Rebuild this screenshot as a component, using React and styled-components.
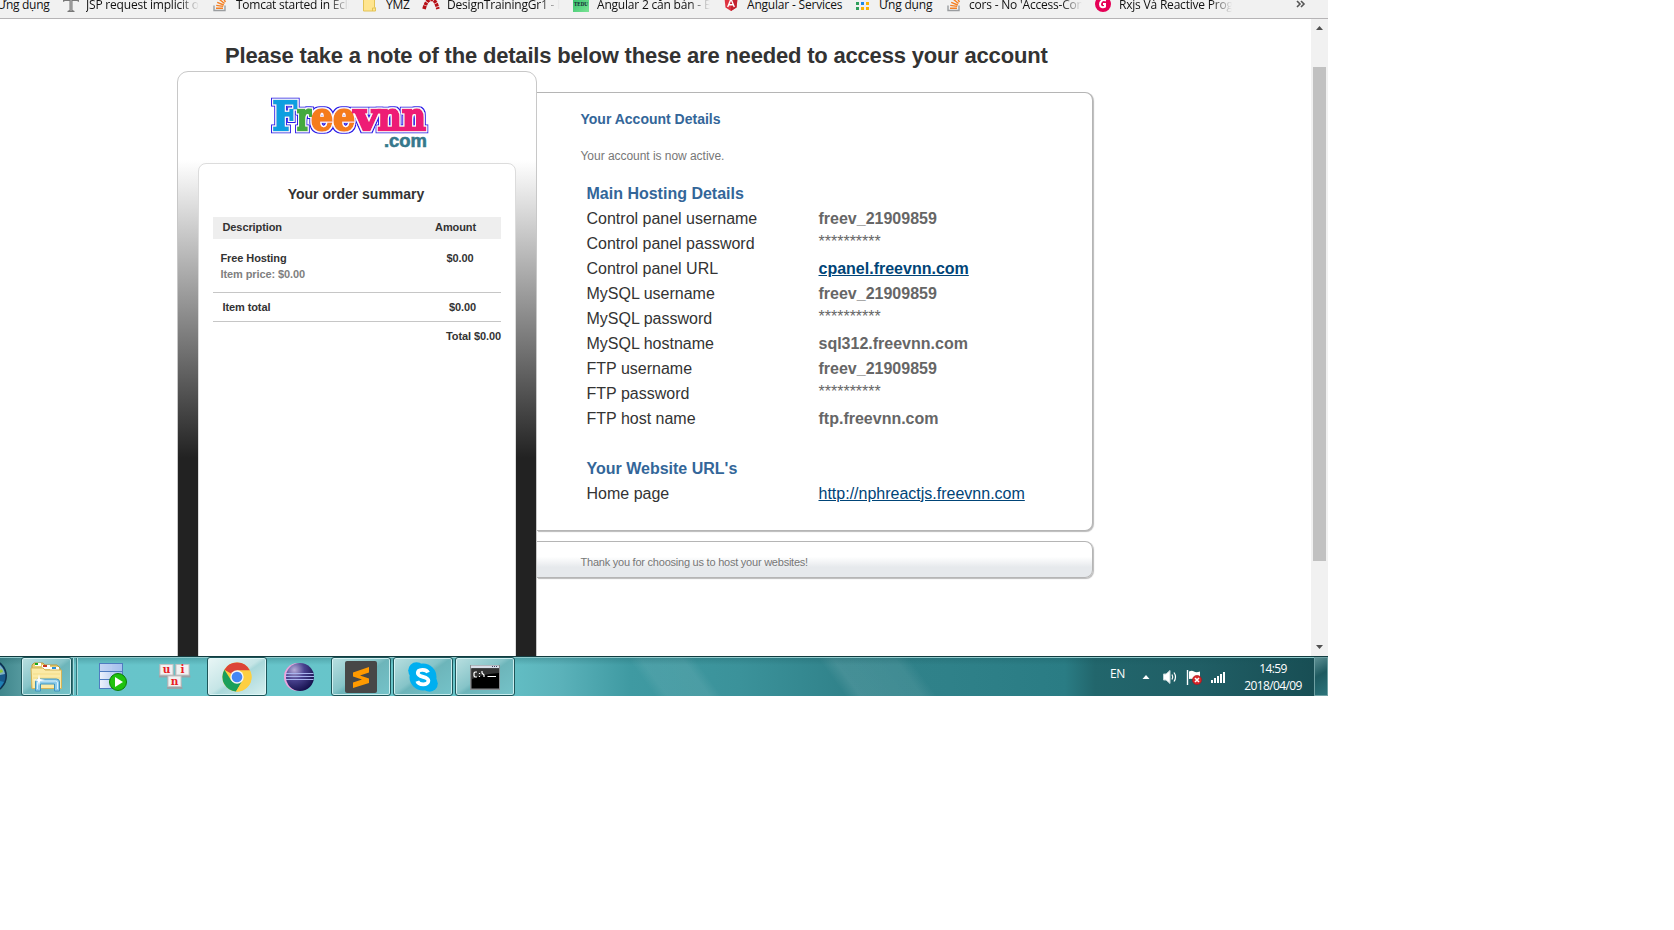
import React from "react";
import styled, { createGlobalStyle } from "styled-components";

const Global = createGlobalStyle`
  html, body { margin: 0; background: #fff; }
  body { font-family: "Liberation Sans", Arial, sans-serif; overflow: hidden; }
`;

const ui = `"Open Sans", "Noto Sans", sans-serif`;

const Screen = styled.div`
  width: 1328px;
  height: 696px;
  display: flex;
  flex-direction: column;
  overflow: hidden;
`;

/* Bookmarks */
const Bookmarks = styled.div`
  box-sizing: border-box;
  height: 19px;
  flex: none;
  display: flex;
  background: #f1f1f1;
  border-bottom: 1px solid #b6b4b6;
  overflow: hidden;
`;
const Bookmark = styled.div`
  width: ${(p) => p.$w}px;
  flex: none;
  height: 18px;
  margin-top: -4px;
  display: flex;
  gap: 7px;
  svg { flex: none; }
`;
const BookmarkText = styled.span`
  width: ${(p) => p.$w || 113}px;
  margin-left: ${(p) => p.$shift || 0}px;
  font: 12px/18px ${ui};
  letter-spacing: ${(p) => p.$ls || 0}px;
  color: #111;
  white-space: nowrap;
  overflow: hidden;
  ${(p) => p.$fade && "mask-image: linear-gradient(90deg, #000 82%, transparent 100%);"}
`;

/* Page */
const Middle = styled.div`
  display: flex;
  height: 637px;
  flex: none;
`;
const Page = styled.main`
  width: 1311px;
  overflow: hidden;
`;
const Heading = styled.h1`
  box-sizing: border-box;
  margin: 0;
  height: 52px;
  padding: 21px 0 0 225px;
  font-size: 22px;
  line-height: 31px;
  letter-spacing: -0.19px;
  color: #333;
  white-space: nowrap;
`;
const Columns = styled.div`
  display: flex;
  padding-left: 177px;
`;
const Side = styled.aside`
  box-sizing: border-box;
  width: 360px;
  height: 600px;
  flex: none;
  border: 1px solid #c8c8c8;
  border-radius: 11px 11px 0 0;
  background: linear-gradient(#fff 88px, #222 386px);
`;
const LogoBox = styled.div`
  height: 91px;
  padding-left: 85px;
  svg { display: block; }
`;
const Summary = styled.section`
  box-sizing: border-box;
  width: 318px;
  height: 520px;
  margin-left: 20px;
  padding: 20px 14px 0;
  border: 1px solid #dcdcdc;
  border-radius: 8px 8px 0 0;
  background: #fff;
  font-size: 11px;
  font-weight: bold;
  letter-spacing: -0.1px;
  color: #333;
`;
const SummaryTitle = styled.h2`
  margin: 0 0 13px;
  font-size: 14px;
  line-height: 20px;
  letter-spacing: 0;
  text-align: center;
  padding-right: 2px;
`;
const Line = styled.div`
  display: flex;
  justify-content: space-between;
`;
const HeadLine = styled(Line)`
  height: 22px;
  line-height: 20px;
  padding: 0 25px 0 9.5px;
  background: #eee;
`;
const ItemLine = styled(Line)`
  line-height: 16px;
  padding: 11px 27.500px 10px 7.500px;
  border-bottom: 1px solid #c6c6c6;
`;
const ItemPrice = styled.div`
  color: #808080;
`;
const TotalLine = styled(Line)`
  line-height: 28px;
  padding: 0 25px 0 9.5px;
  border-bottom: 1px solid #c6c6c6;
`;
const GrandTotal = styled.div`
  line-height: 28px;
  text-align: right;
`;
const Main = styled.div`
  width: 556px;
  padding-top: 21px;
`;
const Panel = styled.section`
  box-sizing: border-box;
  height: ${(p) => p.$h}px;
  margin-bottom: 10px;
  border: 1px solid #b5b5b5;
  border-left: 0;
  border-radius: 0 8px 8px 0;
  box-shadow: 1px 1px 1px #bbb;
  padding: ${(p) => p.$pt}px 0 0 43.500px;
  background: ${(p) => (p.$shaded ? "linear-gradient(#fff 42%, #e6e9ec 72%)" : "#fff")};
`;
const PanelTitle = styled.h2`
  margin: 0 0 17px;
  font-size: 14px;
  line-height: 20px;
  color: #369;
`;
const Note = styled.p`
  margin: 0 0 15px;
  font-size: 12px;
  line-height: 20px;
  letter-spacing: -0.04px;
  color: #777;
`;
const Thanks = styled.p`
  margin: 0;
  font-size: 11px;
  line-height: 32px;
  letter-spacing: -0.23px;
  color: #777;
`;
const Group = styled.div`
  padding: 0 0 25px 6px;
  font-size: 16px;
  line-height: 25px;
  color: #333;
`;
const GroupTitle = styled.div`
  font-weight: bold;
  color: #369;
`;
const Row = styled.div`
  display: grid;
  grid-template-columns: 232px 1fr;
  height: 25px;
`;
const Value = styled.span`
  font-weight: bold;
  color: #666;
`;
const Mask = styled.span`
  line-height: 21px;
  color: #666;
`;
const Link = styled.a`
  font-weight: ${(p) => (p.$plain ? "normal" : "bold")};
  color: #047;
  text-decoration: underline;
`;

/* Scrollbar */
const Scrollbar = styled.div`
  width: 17px;
  display: flex;
  flex-direction: column;
  align-items: center;
  justify-content: space-between;
  background: #f1f1f1;
  svg { display: block; }
`;
const Thumb = styled.div`
  width: 13px;
  height: 494px;
  margin-bottom: 78px;
  background: #c1c1c1;
`;

/* Taskbar */
const Taskbar = styled.footer`
  box-sizing: border-box;
  height: 40px;
  flex: none;
  display: flex;
  border-top: 1px solid #123c40;
  box-shadow: inset 0 1px #8fc9cb;
  background:
    linear-gradient(rgba(20, 80, 85, 0.28), transparent 8px),
    linear-gradient(54deg, transparent 530px, rgba(255,255,255,.07) 540px, rgba(255,255,255,.08) 574px, transparent 584px),
    linear-gradient(54deg, transparent 684px, rgba(255,255,255,.1) 696px, rgba(255,255,255,.08) 746px, transparent 758px),
    linear-gradient(90deg, #3f868c 0, #55999e 22px, #67c4ca 80px, #67c5ca 480px, #5bb2ba 560px, #3f9aa2 630px, #3b929a 740px, #31838b 840px, #2f8189 950px, #2a7c84 1065px, #22666c 1095px, #205e65 1200px, #174c52 1328px);
`;
const Orb = styled.div`
  width: 21px;
  svg { display: block; }
`;
const Task = styled.div`
  box-sizing: border-box;
  width: ${(p) => p.$w || 60}px;
  height: 39px;
  flex: none;
  margin-right: ${(p) => (p.$mr === undefined ? 2 : p.$mr)}px;
  display: flex;
  align-items: center;
  justify-content: center;
  border: 1px solid ${(p) => (p.$open ? "#1d5559" : "transparent")};
  border-radius: 3px;
  ${(p) =>
    p.$open &&
    `box-shadow: inset 0 0 0 1px rgba(225,250,250,.8);
     background: ${
       p.$active
         ? "linear-gradient(145deg, #e9f6f6 0%, #c5e5e6 48%, #a9d8da 54%, #d6efef 100%)"
         : "linear-gradient(145deg, #b9dfe0 0%, #86c4c8 45%, #6db5ba 52%, #75c3c9 100%)"
     };`}
`;
const Stack = styled.div`
  box-sizing: border-box;
  width: 8px;
  height: 37px;
  margin: 1px 3px 0 0;
  display: flex;
  gap: 2px;
  i { width: 1px; border-right: 1px solid #a8dcde; background: #35777c; }
`;
const Spacer = styled.div`
  flex: 1;
`;
const Tray = styled.div`
  display: flex;
  align-items: center;
  gap: 8px;
  color: #fff;
  font: 12px/17px ${ui};
`;
const Lang = styled.span`
  width: 24px;
  padding-bottom: 6px;
  letter-spacing: -0.3px;
`;
const Caret = styled.svg`
  margin-right: 4px;
`;
const Clock = styled.div`
  width: 76px;
  margin: 0 -5px 0 1px;
  text-align: center;
  letter-spacing: -0.6px;
`;
const ShowDesktop = styled.div`
  box-sizing: border-box;
  width: 14px;
  height: 39px;
  border: 1px solid #6fa0a3;
  background: linear-gradient(150deg, #5c8f93, #1e5a60 45%, #2c737a);
`;

const StackIcon = () => (
  <svg width="16" height="16" viewBox="0 0 16 16">
    <path d="M2 9.5v5h11v-5" fill="none" stroke="#9a9da0" strokeWidth="1.4" />
    <path d="M4 12.3h7M4.2 9.4l7 1M5.2 6.4l6.6 2.6M7.2 3.2l5.3 4.3M10 .6l3.5 5.4" stroke="#f48024" strokeWidth="1.4" />
  </svg>
);
const AppsIcon = () => (
  <svg width="16" height="16" viewBox="0 0 16 16">
    {["#e8453c", "#e8453c", "#f9a825", "#2e9e5b", "#1e88e5", "#fbb300", "#2e9e5b", "#fbb300", "#fbb300"].map((c, i) => (
      <rect key={i} x={(i % 3) * 5} y={1 + Math.floor(i / 3) * 5} width="3" height="3" fill={c} />
    ))}
  </svg>
);
const TowerIcon = () => (
  <svg width="16" height="16" viewBox="0 0 16 16">
    <path d="M0 3h16v3l-2-1H9.500v9l2 1v1h-7v-1l2-1V5H2L0 6z" fill="#777" />
    <path d="M8 4v11" stroke="#bbb" />
  </svg>
);
const FolderIcon = () => (
  <svg width="16" height="16" viewBox="0 0 16 16">
    <path d="M2.500 0h11v11l1 1v3h-12z" fill="#ffe58f" stroke="#e3c356" />
    <path d="M11.500 15v-3h3" fill="none" stroke="#e3c356" />
  </svg>
);
const ArchIcon = () => (
  <svg width="18" height="16" viewBox="0 0 18 16">
    <path d="M2 13C3.500 8 5 4 9 3.500S14.500 8 16 13" fill="none" stroke="#b80f16" strokeWidth="3.600" strokeDasharray="3.200 .7" />
  </svg>
);
const GreenIcon = () => (
  <svg width="16" height="16" viewBox="0 0 16 16">
    <defs>
      <linearGradient id="green" x2="1" y2="1">
        <stop stopColor="#2dbd67" />
        <stop offset="1" stopColor="#7be495" />
      </linearGradient>
    </defs>
    <rect width="16" height="16" fill="url(#green)" />
    <text x="8" y="9.500" textAnchor="middle" fontFamily="Liberation Serif, serif" fontWeight="bold" fontSize="6" textLength="14" lengthAdjust="spacingAndGlyphs" fill="#123">TEDU</text>
  </svg>
);
const ShieldIcon = () => (
  <svg width="16" height="16" viewBox="0 0 16 16">
    <path d="M8 0l6.500 2.300-1 9.200L8 15l-5.500-3.500-1-9.200z" fill="#dd3340" />
    <path d="M8 0l6.500 2.300-1 9.200L8 15z" fill="#c3202f" />
    <path d="M4.700 11L8 3l3.300 8M6 8.800h4" fill="none" stroke="#fff" strokeWidth="1.400" />
  </svg>
);
const GIcon = () => (
  <svg width="16" height="16" viewBox="0 0 16 16">
    <circle cx="8" cy="8" r="8" fill="#e50056" />
    <path d="M11 4.500C7 3 5 6 5 8.500s3 3.500 5 2.200V8H8" fill="none" stroke="#fff" strokeWidth="2" />
  </svg>
);

const wordmark = [
  ["F", 9.5, 24.5, "#0a9fe0"],
  ["r", 34, 14, "#44a93f"],
  ["ee", 48, 44, "#f57c1f"],
  ["v", 91, 25, "#ee1c74"],
  ["nn", 114.5, 48.5, "#ee1c74"],
];
const Logo = () => (
  <svg width="180" height="91" viewBox="0 0 180 91">
    <defs>
      <filter id="outline" x="-10%" y="-20%" width="120%" height="140%">
        <feMorphology in="SourceAlpha" operator="dilate" radius="2.4" result="wide" />
        <feFlood floodColor="#2a17e8" />
        <feComposite in2="wide" operator="in" result="blue" />
        <feMorphology in="SourceAlpha" operator="dilate" radius="1.3" result="narrow" />
        <feFlood floodColor="#fff" />
        <feComposite in2="narrow" operator="in" result="white" />
        <feMerge>
          <feMergeNode in="blue" />
          <feMergeNode in="white" />
          <feMergeNode in="SourceGraphic" />
        </feMerge>
      </filter>
    </defs>
    <g fontFamily="DejaVu Serif, serif" fontWeight="bold" fontSize="39" filter="url(#outline)">
      {wordmark.map(([t, x, len, color]) => (
        <text key={t} x={x} y="58" textLength={len} lengthAdjust="spacingAndGlyphs" fill={color} stroke={color} strokeWidth="2.4">{t}</text>
      ))}
    </g>
    <text x="121" y="75" textLength="43" lengthAdjust="spacingAndGlyphs" fontFamily="Liberation Sans, sans-serif" fontWeight="bold" fontSize="18.500" fill="#36788c" stroke="#36788c" strokeWidth=".6">.com</text>
  </svg>
);

const OrbIcon = () => (
  <svg width="21" height="39" viewBox="0 0 21 39">
    <circle cx="-10" cy="19" r="17" fill="#0d2f4d" />
    <circle cx="-10" cy="19" r="15.500" fill="#17588a" />
    <path d="M0 8a15.500 15.500 0 0 1 5 9l-5 1z" fill="#7fb0c4" />
    <path d="M0 13l2-1 1 3-3 1z" fill="#8dc63f" />
    <path d="M0 24l4 1-4 6z" fill="#1f7fb4" />
  </svg>
);
const ExplorerIcon = () => (
  <svg width="34" height="32" viewBox="0 0 34 32">
    <path d="M2 4l2-2h9l2 2h12l3 3v20H2z" fill="#e8cd73" stroke="#b99b42" />
    <path d="M5 2h6v3H5z" fill="#fff" /><path d="M5 2h3v2H5z" fill="#18a818" />
    <path d="M12 4h8v4h-8z" fill="#fff" /><path d="M13 4h4v2h-4z" fill="#c8361e" />
    <path d="M20 6h9v4h-9z" fill="#fff" /><path d="M22 6h4v2h-4z" fill="#2b8fd6" />
    <path d="M1 7h12l2 2h16.500v18.500H2z" fill="#fbeaa6" stroke="#d3b45a" />
    <path d="M3 13h27M3 17h27" stroke="#f3dc87" />
    <path d="M5.500 30v-9q0-3 3-3h18q3 0 3 3v9h-5v-7h-14v7z" fill="#8ccbea" stroke="#3f94bd" />
    <path d="M7.500 28v-6q0-2 2-2h16q2 0 2 2v6" fill="none" stroke="#d9f2fd" />
    <path d="M9 13l1 5 5 1-5 1-1 5-1-5-5-1 5-1z" fill="#fff" />
  </svg>
);
const TableIcon = () => (
  <svg width="32" height="32" viewBox="0 0 32 32">
    <defs>
      <linearGradient id="cells"><stop stopColor="#eef3fd" /><stop offset="1" stopColor="#9fbcec" /></linearGradient>
    </defs>
    <rect x="2.500" y="2.500" width="23" height="25" fill="url(#cells)" stroke="#4f7cc0" />
    <path d="M3 3h22v7H3z" fill="#a9c1ec" opacity=".6" />
    <path d="M14 3v24" stroke="#b9cdf2" />
    <path d="M2 10.500h24M2 18.500h24" stroke="#4f7cc0" strokeWidth="1.200" />
    <circle cx="21" cy="21" r="8.500" fill="#1fc20f" stroke="#0d7d09" />
    <path d="M18 16l8 5-8 5z" fill="#fff" />
  </svg>
);
const KeysIcon = () => (
  <svg width="34" height="32" viewBox="0 0 34 32">
    {[["u", 1.5, 3.5], ["i", 17.5, 3.5], ["n", 9.5, 15]].map(([t, x, y]) => (
      <g key={t}>
        <path d={`M${x} ${y}h13l2 13h-15.500z`} fill="#9aa2a5" />
        <rect x={x + 0.5} y={y} width="13" height="10.500" fill="#f1f1f1" stroke="#c4c4c4" />
        <text x={x + 7} y={y + 8.5} textAnchor="middle" fontFamily="DejaVu Serif, serif" fontWeight="bold" fontSize="10.500" fill="#e81c24">{t}</text>
      </g>
    ))}
  </svg>
);
const ChromeIcon = () => (
  <svg width="30" height="30" viewBox="0 0 30 30">
    <circle cx="15" cy="15" r="14.600" fill="#fdcf41" />
    <path d="M15 15L2.400 7.700A14.600 14.600 0 0 1 27.900 8.500H15z" fill="#dc4437" />
    <path d="M2.400 7.700A14.600 14.600 0 0 0 14 29.600l6.500-11L9.300 18.500z" fill="#1a9f5a" />
    <path d="M15 8.500h12.900A14.600 14.600 0 0 1 14 29.600L20.600 18.500z" fill="#fdcf41" />
    <circle cx="15" cy="15" r="6.700" fill="#f6f6f6" />
    <circle cx="15" cy="15" r="5.300" fill="#4486f5" />
  </svg>
);
const EclipseIcon = () => (
  <svg width="30" height="30" viewBox="0 0 30 30">
    <defs>
      <radialGradient id="ecl" cx=".3" cy=".25" r=".8">
        <stop stopColor="#b6add9" /><stop offset=".45" stopColor="#4a4390" /><stop offset="1" stopColor="#15104d" />
      </radialGradient>
    </defs>
    <circle cx="14" cy="15" r="14" fill="#eca5dd" />
    <circle cx="16" cy="15" r="14" fill="url(#ecl)" />
    <path d="M2 11.500h27.500M2 14.500h28M2 17.500h27.500" stroke="#a9b5ee" strokeWidth="1.100" />
  </svg>
);
const SublimeIcon = () => (
  <svg width="32" height="32" viewBox="0 0 32 32">
    <rect width="32" height="32" rx="2" fill="#474747" />
    <path d="M8 11.500L24 6v5.500L15 14.500l9 3v4.500L8 27v-5.500l9-3-9-3z" fill="#ff9a00" />
  </svg>
);
const SkypeIcon = () => (
  <svg width="30" height="30" viewBox="0 0 30 30">
    <circle cx="15" cy="15" r="13.500" fill="#00aff0" />
    <circle cx="8.500" cy="8.500" r="8.300" fill="#00aff0" />
    <circle cx="21.500" cy="21.500" r="8.300" fill="#00aff0" />
    <path d="M20 10.500C18.500 6.800 9.800 6.800 9.800 11c0 4.800 10.600 3 10.600 7.800 0 4.700-9.600 4.700-11.100 .4" fill="none" stroke="#fff" strokeWidth="3.800" />
  </svg>
);
const CmdIcon = () => (
  <svg width="32" height="28" viewBox="0 0 32 28">
    <rect x="1" y="2" width="30" height="25" fill="#888d90" />
    <rect x="2" y="2.500" width="28" height="2.500" fill="#d8dee8" />
    <path d="M23 3.500h5" stroke="#446" strokeDasharray="1 1" />
    <rect x="2.500" y="5.500" width="27.500" height="20" fill="#000" />
    <path d="M3 6h27v4Q14 11 3 16z" fill="#333" />
    <path d="M8 9H6l-1 1v3l1 1h2M10.500 10v1M10.500 13v1M13 8v2l2 2v2M18.500 13.500H27" fill="none" stroke="#fff" strokeWidth="1.200" />
  </svg>
);
const SpeakerIcon = () => (
  <svg width="16" height="16" viewBox="0 0 16 16">
    <path d="M1.500 5h2.500L8 1.500v13L4 11H1.500z" fill="#fff" stroke="#c4d6d7" />
    <path d="M10 5.500q1.500 2.500 0 5M12 3.500q3 4.500 0 9" fill="none" stroke="#fff" strokeWidth="1.200" />
  </svg>
);
const FlagIcon = () => (
  <svg width="16" height="16" viewBox="0 0 16 16">
    <path d="M1.500 1v15" stroke="#fff" strokeWidth="1.400" />
    <path d="M3 2.500q3-1.500 5 0t6 0v8q-3 1-5.500 0T3 10z" fill="#fff" />
    <circle cx="11" cy="11" r="4.600" fill="#d8262a" stroke="#a5141a" strokeWidth=".6" />
    <path d="M9 9l4 4M13 9l-4 4" stroke="#fff" strokeWidth="1.600" />
  </svg>
);
const SignalIcon = () => (
  <svg width="16" height="14" viewBox="0 0 16 14">
    {[3, 5, 7, 9, 11].map((h, i) => (
      <rect key={h} x={1 + i * 3} y={13 - h} width="2" height={h} fill="#fff" />
    ))}
  </svg>
);

const details = [
  ["Control panel username", "freev_21909859"],
  ["Control panel password", "**********"],
  ["Control panel URL", "cpanel.freevnn.com"],
  ["MySQL username", "freev_21909859"],
  ["MySQL password", "**********"],
  ["MySQL hostname", "sql312.freevnn.com"],
  ["FTP username", "freev_21909859"],
  ["FTP password", "**********"],
  ["FTP host name", "ftp.freevnn.com"],
];

const DetailValue = ({ label, value }) => {
  if (label.endsWith("URL")) return <span><Link>{value}</Link></span>;
  if (label.endsWith("password")) return <Mask>{value}</Mask>;
  return <Value>{value}</Value>;
};

export default function App() {
  return (
    <Screen>
      <Global />
      <Bookmarks>
        <Bookmark $w={63}><BookmarkText $w={60} $shift={-3} $ls={-0.3}>Ứng dụng</BookmarkText></Bookmark>
        <Bookmark $w={149}><TowerIcon /><BookmarkText $fade $ls={-0.2}>JSP request implicit objects</BookmarkText></Bookmark>
        <Bookmark $w={149}><StackIcon /><BookmarkText $fade $shift={1} $ls={-0.25}>Tomcat started in Eclipse</BookmarkText></Bookmark>
        <Bookmark $w={61}><FolderIcon /><BookmarkText $w={38} $shift={2} $ls={-0.3}>YMZ</BookmarkText></Bookmark>
        <Bookmark $w={151}><ArchIcon /><BookmarkText $fade $ls={-0.2}>DesignTrainingGr1 - Invision</BookmarkText></Bookmark>
        <Bookmark $w={150}><GreenIcon /><BookmarkText $fade $shift={1} $ls={-0.2}>Angular 2 căn bản - Bài 1</BookmarkText></Bookmark>
        <Bookmark $w={133}><ShieldIcon /><BookmarkText $w={108} $shift={1} $ls={-0.2}>Angular - Services</BookmarkText></Bookmark>
        <Bookmark $w={90}><AppsIcon /><BookmarkText $w={60} $ls={-0.2}>Ứng dụng</BookmarkText></Bookmark>
        <Bookmark $w={149}><StackIcon /><BookmarkText $fade $ls={-0.2}>cors - No 'Access-Control</BookmarkText></Bookmark>
        <Bookmark $w={201}><GIcon /><BookmarkText $fade $shift={1} $ls={-0.2}>Rxjs Và Reactive Programming</BookmarkText></Bookmark>
        <svg width="10" height="12" viewBox="0 0 10 12"><path d="M1 1l3 3-3 3M5 1l3 3-3 3" fill="none" stroke="#555" strokeWidth="1.600" /></svg>
      </Bookmarks>

      <Middle>
        <Page>
          <Heading>Please take a note of the details below these are needed to access your account</Heading>
          <Columns>
            <Side>
              <LogoBox><Logo /></LogoBox>
              <Summary>
                <SummaryTitle>Your order summary</SummaryTitle>
                <HeadLine><span>Description</span><span>Amount</span></HeadLine>
                <ItemLine>
                  <div>Free Hosting<ItemPrice>Item price: $0.00</ItemPrice></div>
                  <span>$0.00</span>
                </ItemLine>
                <TotalLine><span>Item total</span><span>$0.00</span></TotalLine>
                <GrandTotal>Total $0.00</GrandTotal>
              </Summary>
            </Side>
            <Main>
              <Panel $h={439} $pt={16}>
                <PanelTitle>Your Account Details</PanelTitle>
                <Note>Your account is now active.</Note>
                <Group>
                  <GroupTitle>Main Hosting Details</GroupTitle>
                  {details.map(([label, value]) => (
                    <Row key={label}>
                      <span>{label}</span>
                      <DetailValue label={label} value={value} />
                    </Row>
                  ))}
                </Group>
                <Group>
                  <GroupTitle>Your Website URL's</GroupTitle>
                  <Row><span>Home page</span><span><Link $plain>http://nphreactjs.freevnn.com</Link></span></Row>
                </Group>
              </Panel>
              <Panel $h={37} $pt={4} $shaded>
                <Thanks>Thank you for choosing us to host your websites!</Thanks>
              </Panel>
            </Main>
          </Columns>
        </Page>
        <Scrollbar>
          <svg width="17" height="48" viewBox="0 0 17 48"><path d="M5 11l3.500-4 3.500 4z" fill="#505050" /></svg>
          <Thumb />
          <svg width="17" height="17" viewBox="0 0 17 17"><path d="M5 6h7l-3.500 4z" fill="#505050" /></svg>
        </Scrollbar>
      </Middle>

      <Taskbar>
        <Orb><OrbIcon /></Orb>
        <Task $open $w={51} $mr={0}><ExplorerIcon /></Task>
        <Stack><i /><i /></Stack>
        <Task><TableIcon /></Task>
        <Task><KeysIcon /></Task>
        <Task $open $active><ChromeIcon /></Task>
        <Task><EclipseIcon /></Task>
        <Task $open><SublimeIcon /></Task>
        <Task $open><SkypeIcon /></Task>
        <Task $open><CmdIcon /></Task>
        <Spacer />
        <Tray>
          <Lang>EN</Lang>
          <Caret width="8" height="6" viewBox="0 0 8 6"><path d="M.5 5L4 1l3.500 4z" fill="#fff" /></Caret>
          <SpeakerIcon />
          <FlagIcon />
          <SignalIcon />
          <Clock>14:59<br />2018/04/09</Clock>
          <ShowDesktop />
        </Tray>
      </Taskbar>
    </Screen>
  );
}
